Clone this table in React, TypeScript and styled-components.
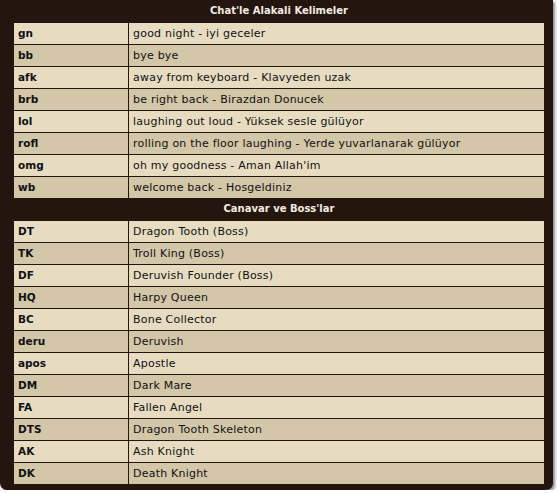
import React from 'react';
import styled, { createGlobalStyle } from 'styled-components';

const GlobalStyle = createGlobalStyle`
  html, body {
    margin: 0;
    padding: 0;
    background: #ffffff;
  }
`;

const Panel = styled.div`
  width: 553px;
  height: 490px;
  box-sizing: border-box;
  background-color: #24150f;
  border-radius: 0 0 7px 7px;
  box-shadow: 2px 2px 3px #8f8a88;
  padding: 0 9px 0 14px;
  font-family: 'DejaVu Sans', Verdana, sans-serif;
  font-size: 10px;
`;

const Section = styled.div`
  display: grid;
  grid-template-columns: 114px 1fr;
  column-gap: 1px;
  row-gap: 1px;
`;

const Header = styled.div`
  grid-column: 1 / -1;
  height: 22px;
  line-height: 22px;
  text-align: center;
  font-weight: bold;
  color: #f3ece0;
`;

const Cell = styled.div<{ $alt: boolean; $bold?: boolean }>`
  height: 21px;
  line-height: 21px;
  padding-left: 4px;
  white-space: nowrap;
  color: #111;
  font-size: ${p => (p.$bold ? '10.5px' : '11px')};
  letter-spacing: ${p => (p.$bold ? '0' : '0.22px')};
  font-weight: ${p => (p.$bold ? 'bold' : 'normal')};
  background-color: ${p => (p.$alt ? '#d3c6a9' : '#e7dcc2')};
`;

const chat: [string, string][] = [
  ['gn', 'good night - iyi geceler'],
  ['bb', 'bye bye'],
  ['afk', 'away from keyboard - Klavyeden uzak'],
  ['brb', 'be right back - Birazdan Donucek'],
  ['lol', 'laughing out loud - Yüksek sesle gülüyor'],
  ['rofl', 'rolling on the floor laughing - Yerde yuvarlanarak gülüyor'],
  ['omg', "oh my goodness - Aman Allah'im"],
  ['wb', 'welcome back - Hosgeldiniz'],
];

const monsters: [string, string][] = [
  ['DT', 'Dragon Tooth (Boss)'],
  ['TK', 'Troll King (Boss)'],
  ['DF', 'Deruvish Founder (Boss)'],
  ['HQ', 'Harpy Queen'],
  ['BC', 'Bone Collector'],
  ['deru', 'Deruvish'],
  ['apos', 'Apostle'],
  ['DM', 'Dark Mare'],
  ['FA', 'Fallen Angel'],
  ['DTS', 'Dragon Tooth Skeleton'],
  ['AK', 'Ash Knight'],
  ['DK', 'Death Knight'],
];

function Block({ title, rows }: { title: string; rows: [string, string][] }) {
  return (
    <Section>
      <Header>{title}</Header>
      {rows.map(([abbr, meaning], i) => (
        <React.Fragment key={abbr}>
          <Cell $alt={i % 2 === 1} $bold>{abbr}</Cell>
          <Cell $alt={i % 2 === 1}>{meaning}</Cell>
        </React.Fragment>
      ))}
    </Section>
  );
}

export default function App() {
  return (
    <>
      <GlobalStyle />
      <Panel>
        <Block title="Chat'le Alakali Kelimeler" rows={chat} />
        <Block title="Canavar ve Boss'lar" rows={monsters} />
      </Panel>
    </>
  );
}
